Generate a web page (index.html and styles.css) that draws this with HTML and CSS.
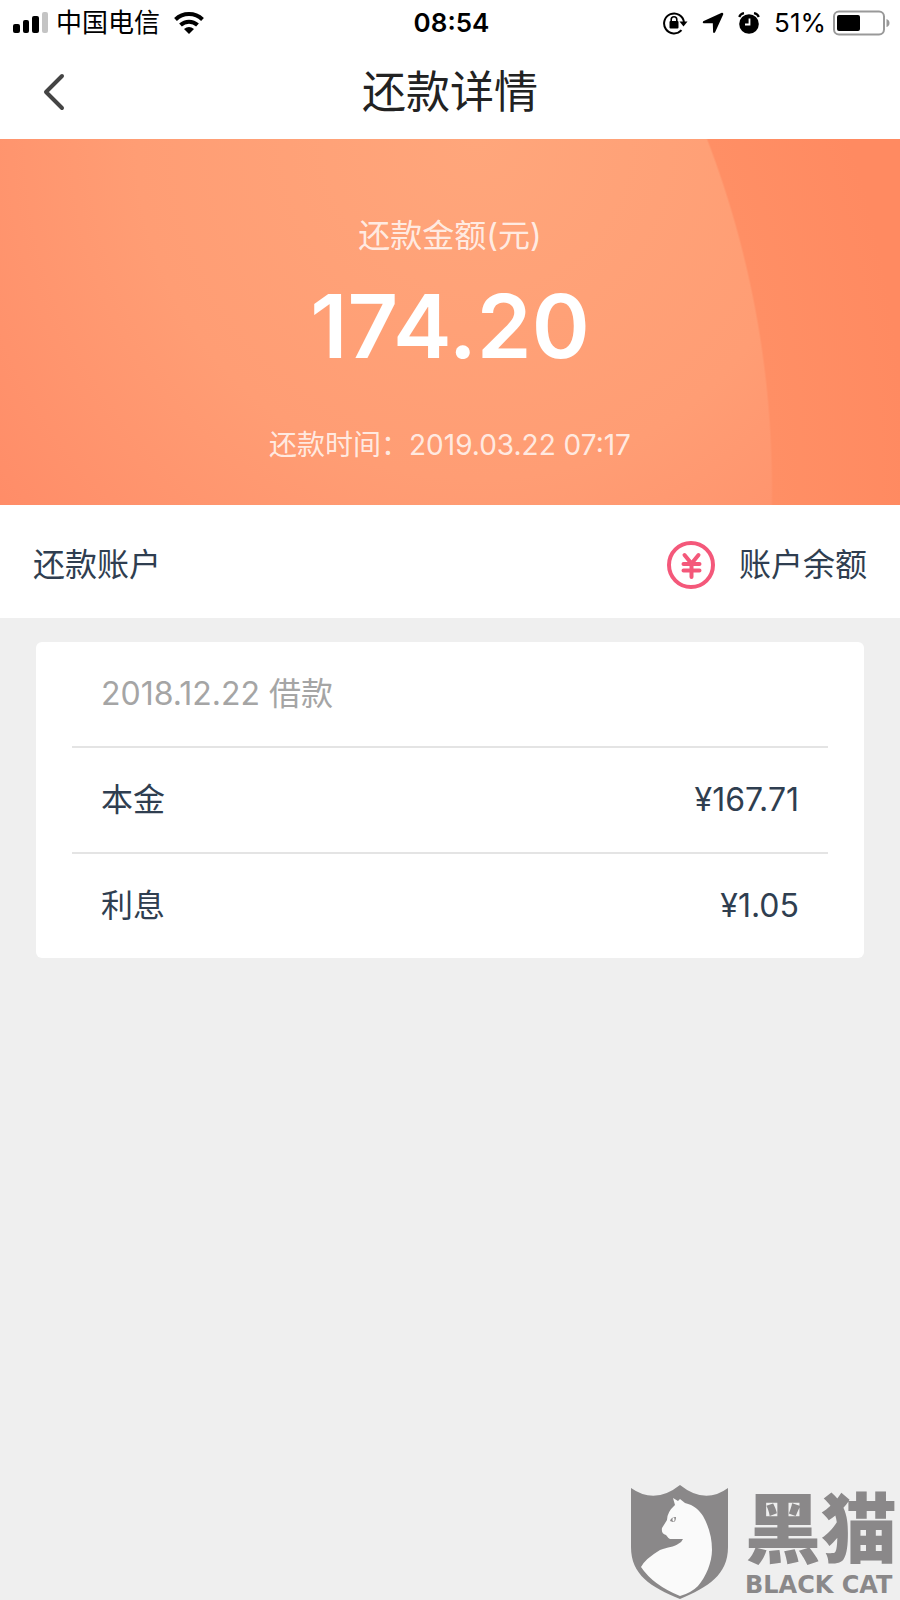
FILE: index.html
```html
<!DOCTYPE html>
<html lang="zh-CN">
<head>
  <meta charset="UTF-8">
  <meta name="viewport" content="width=device-width, initial-scale=1.0">
  <title>还款详情</title>
  <link rel="stylesheet" href="styles.css">
</head>
<body>
  <div class="status-bar">
    <div class="status-left">
      <svg class="signal" width="36" height="24" viewBox="0 0 36 24">
        <rect x="0" y="13" width="7" height="9" rx="2"/>
        <rect x="10" y="9" width="6" height="13" rx="2"/>
        <rect x="19" y="5" width="7" height="17" rx="2"/>
        <rect x="29" y="1" width="6" height="21" rx="2" fill="#c4c4c4"/>
      </svg>
      <span class="carrier">中国电信</span>
      <svg class="wifi" width="30" height="22" viewBox="0 0 30 22">
        <g fill="none" stroke="#000" stroke-width="4">
          <path d="M1.500 7.500a19.500 19.500 0 0 1 27 0"/>
          <path d="M6.500 13a12.500 12.500 0 0 1 17 0"/>
        </g>
        <path d="M10 17q5-4 10 0l-5 5z"/>
      </svg>
    </div>
    <span class="time">08:54</span>
    <div class="status-right">
      <svg width="25" height="24" viewBox="0 0 25 24">
        <path d="M18.500 19.200A10 10 0 1 1 21 11" fill="none" stroke="#000" stroke-width="2"/>
        <path d="M16.500 10.500h8l-4 5z"/>
        <rect x="6.500" y="10" width="9" height="7.500" rx="1"/>
        <path d="M8.200 11V8.500a2.800 2.800 0 0 1 5.600 0V11" fill="none" stroke="#000" stroke-width="1.600"/>
      </svg>
      <svg width="22" height="22" viewBox="0 0 22 22">
        <path d="M19.800.8L1.200 9.300q-1.200 1.400.3 2l9.300 0 .3 9q.8 1.600 2 0L21.300 2.300q.2-1.800-1.500-1.500z"/>
      </svg>
      <svg width="22" height="22" viewBox="0 0 22 22">
        <circle cx="11" cy="12" r="9.800"/>
        <path d="M1.200 5Q2.500 1.800 6 1.200M20.800 5Q19.500 1.800 16 1.200" fill="none" stroke="#000" stroke-width="2.200"/>
        <path d="M11.500 6.500v6H7" fill="none" stroke="#fff" stroke-width="1.800"/>
      </svg>
      <span class="percent">51%</span>
      <svg class="battery" width="57" height="26" viewBox="0 0 57 26">
        <rect x="1" y="1.500" width="50" height="23" rx="5" fill="#fff" stroke="#999" stroke-width="2"/>
        <rect x="4" y="5" width="23" height="16" rx="2"/>
        <path d="M53.500 9q3 1 3 4t-3 4z" fill="#999"/>
      </svg>
    </div>
  </div>

  <header class="nav">
    <button class="back" type="button" aria-label="返回">
      <svg width="22" height="38" viewBox="0 0 22 38">
        <path d="M19 3L3 19l16 16" fill="none" stroke="#444" stroke-width="4" stroke-linecap="round" stroke-linejoin="round"/>
      </svg>
    </button>
    <h1>还款详情</h1>
  </header>

  <section class="hero">
    <p class="hero-label">还款金额(元)</p>
    <p class="hero-amount">174.20</p>
    <p class="hero-time">还款时间：2019.03.22 07:17</p>
  </section>

  <section class="account">
    <span>还款账户</span>
    <span class="account-value">
      <svg width="48" height="48" viewBox="0 0 48 48" fill="none" stroke="#f4587a">
        <circle cx="24" cy="24" r="22" stroke-width="4"/>
        <path d="M17.500 14l7 8.500 7-8.500M24.500 22v14M16.500 23h16M16.500 29.500h16" stroke-width="4" stroke-linecap="round"/>
      </svg>
      账户余额
    </span>
  </section>

  <main class="card">
    <div class="row row-title">2018.12.22 借款</div>
    <div class="row"><span>本金</span><span>¥167.71</span></div>
    <div class="row"><span>利息</span><span>¥1.05</span></div>
  </main>

  <div class="watermark">
    <svg width="98" height="115" viewBox="0 0 98 115">
      <path d="M0 3q24 17 49-3q25 20 48 3v59c0 28-20 40-48 52C20 102 0 90 0 62z" fill="#8a8889"/>
      <path d="M42 13l5 3 2-2 5 4c9 2 14 7 18 13q9 16 9 34c0 12-6 27-14 36q-7 7-18 10Q22 100 10 82q4-8 19-17c8-3 14-3 18-6q4-2 5-5H39q-2-1-4-4-5-1-4-7l5-8q0-8 8-15z" fill="#fafafa"/>
      <path d="M39 36q1-4 6-4 0 5-3 5z" fill="#8a8889"/>
      <ellipse cx="42.500" cy="34.500" rx="1" ry="2" fill="#fff"/>
    </svg>
    <div class="brand">
      <span class="brand-cn">黑猫</span>
      <span class="brand-en">BLACK CAT</span>
    </div>
  </div>
</body>
</html>
```
FILE: styles.css
```css
* {
  box-sizing: border-box;
}
body {
  margin: 0;
  min-height: 100vh;
  position: relative;
  font-family: Inter, "Noto Sans CJK SC", sans-serif;
  font-size: 32px;
  line-height: 48px;
  color: #2f3e50;
  background-color: #efefef;
}
h1, p {
  margin: 0;
}
svg {
  display: block;
  flex-shrink: 0;
}
.status-bar {
  display: grid;
  grid-template-columns: 1fr auto 1fr;
  align-items: center;
  height: 46px;
  padding: 0 10px 0 13px;
  font-size: 26px;
  line-height: 46px;
  color: #000;
  background-color: #fff;
}
.status-left, .status-right {
  display: flex;
  align-items: center;
}
.status-left {
  gap: 7px;
}
.wifi {
  margin-left: 7px;
}
.time {
  font-weight: 600;
}
.status-right {
  justify-content: flex-end;
  gap: 14px;
}
.battery {
  margin-left: -7px;
}
.nav {
  display: grid;
  grid-template-columns: 64px 1fr 64px;
  align-items: center;
  height: 93px;
  padding: 0 23px 2px;
  background-color: #fff;
}
.back {
  padding: 0 20px;
  border: 0;
  background: none;
  cursor: pointer;
}
h1 {
  font-size: 44px;
  font-weight: 400;
  text-align: center;
  color: #222;
}
.hero {
  padding: 73px 0 34px;
  text-align: center;
  color: rgba(255, 255, 255, 0.8);
  /* big circle edge over the warm glow */
  background:
    radial-gradient(circle at calc(50% - 653px) 350px, transparent 974px, #ff8f65 976px, #ff8a61 1110px),
    radial-gradient(circle at 53% 0, #ffa67b 0, #ff9d74 340px, #ff8a66 640px);
}
.hero-amount {
  padding: 10px 0 38px;
  font-size: 88px;
  font-weight: 600;
  line-height: 112px;
  color: #fff;
}
.hero-time {
  font-size: 28px;
  line-height: 51px;
}
.account {
  display: flex;
  justify-content: space-between;
  align-items: center;
  height: 113px;
  padding: 6px 33px 0;
  background-color: #fff;
}
.account-value {
  display: flex;
  align-items: center;
  gap: 24px;
}
.card {
  margin: 24px 36px;
  padding: 0 36px;
  border-radius: 6px;
  background-color: #fff;
}
.row {
  display: flex;
  justify-content: space-between;
  padding: 28px 29px;
}
.row + .row {
  border-top: 2px solid #e4e4e4;
}
.row-title {
  color: #a5a5a5;
}
.watermark {
  position: absolute;
  right: 3px;
  bottom: 0;
  display: flex;
  gap: 16px;
  color: #8a8889;
}
.brand {
  display: flex;
  flex-direction: column;
  justify-content: space-between;
}
.brand-cn {
  font-family: "Noto Sans CJK SC", sans-serif;
  font-size: 76px;
  font-weight: 900;
  line-height: 78px;
}
.brand-en {
  font-family: "DejaVu Sans", sans-serif;
  font-size: 24px;
  font-weight: 700;
  line-height: 30px;
}
```
